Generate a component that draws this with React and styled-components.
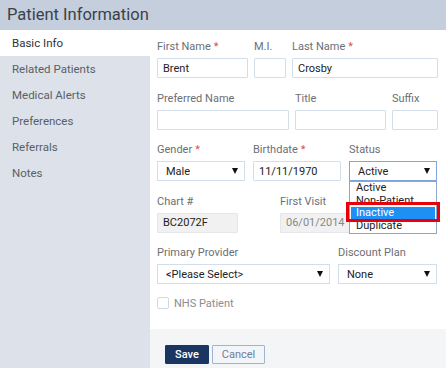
import React from 'react'
import styled, { createGlobalStyle } from 'styled-components'

const Global = createGlobalStyle`
  body {
    margin: 0;
    font-family: Roboto, "Liberation Sans", sans-serif;
    background: #fff;
  }
  * { box-sizing: border-box; }
`

const sideItems = ['Basic Info', 'Related Patients', 'Medical Alerts', 'Preferences', 'Referrals', 'Notes']
const statusOptions = ['Active', 'Non-Patient', 'Inactive', 'Duplicate']

function Select({ value, width, focused, children }) {
  return (
    <SelectBox width={width} focused={focused}>
      <span>{value}</span>
      <Caret />
      {children}
    </SelectBox>
  )
}

function Field({ label, required, width, children, ...rest }) {
  return (
    <FieldWrap width={width} {...rest}>
      <Label>
        {label}
        {required && <Req>*</Req>}
      </Label>
      {children}
    </FieldWrap>
  )
}

export default function App() {
  return (
    <>
      <Global />
      <Page>
        <Header>Patient Information</Header>
        <Sidebar>
          {sideItems.map((s, i) => (
            <SideItem key={s} active={i === 0}>{s}</SideItem>
          ))}
        </Sidebar>
        <Main>
          <Form>
            <Row>
              <Field label="First Name" required width={91}>
                <Input readOnly value="Brent" />
              </Field>
              <Field label="M.I." width={32}>
                <Input readOnly value="" />
              </Field>
              <Field label="Last Name" required width={146}>
                <Input readOnly value="Crosby" />
              </Field>
            </Row>
            <Row>
              <Field label="Preferred Name" width={132}>
                <Input readOnly value="" />
              </Field>
              <Field label="Title" width={91}>
                <Input readOnly value="" />
              </Field>
              <Field label="Suffix" width={46}>
                <Input readOnly value="" />
              </Field>
            </Row>
            <Row gap={8}>
              <Field label="Gender" required width={88}>
                <Select value="Male" />
              </Field>
              <Field label="Birthdate" required width={88}>
                <Input readOnly value="11/11/1970" />
              </Field>
              <Field label="Status" width={88} style={{ zIndex: 2 }}>
                <Select value="Active" focused>
                  <DropList>
                    {statusOptions.map((o) => (
                      <Option key={o} selected={o === 'Inactive'}>{o}</Option>
                    ))}
                  </DropList>
                  <Highlight />
                </Select>
              </Field>
            </Row>
            <Row gap={42}>
              <Field label="Chart #" width={81}>
                <Input readOnly disabled value="BC2072F" dark />
              </Field>
              <Field label="First Visit" width={81}>
                <Input readOnly disabled value="06/01/2014" />
              </Field>
            </Row>
            <Row gap={8}>
              <Field label="Primary Provider" width={173}>
                <Select value="<Please Select>" />
              </Field>
              <Field label="Discount Plan" width={99}>
                <Select value="None" />
              </Field>
            </Row>
            <CheckRow>
              <Box />
              <span>NHS Patient</span>
            </CheckRow>
          </Form>
          <Footer>
            <SaveButton>Save</SaveButton>
            <CancelButton>Cancel</CancelButton>
          </Footer>
        </Main>
      </Page>
    </>
  )
}

const Page = styled.div`
  width: 446px;
  height: 368px;
  display: grid;
  grid-template-columns: 150px 1fr;
  grid-template-rows: 30px 1fr;
  overflow: hidden;
`

const Header = styled.div`
  grid-column: 1 / 3;
  background: #c4cedc;
  color: #3b414b;
  font-size: 16.5px;
  line-height: 30px;
  padding-left: 7px;
`

const Sidebar = styled.div`
  background: #dde2ea;
  display: flex;
  flex-direction: column;
`

const SideItem = styled.div`
  height: 26px;
  line-height: 26px;
  padding-left: 12px;
  font-size: 11.5px;
  color: ${(p) => (p.active ? '#333' : '#5a5f66')};
  background: ${(p) => (p.active ? '#fff' : 'transparent')};
`

const Main = styled.div`
  display: flex;
  flex-direction: column;
  background: #fff;
`

const Form = styled.div`
  flex: 1;
  padding: 10px 9px 0 7px;
  display: flex;
  flex-direction: column;
  gap: 13.5px;
`

const Row = styled.div`
  display: flex;
  gap: ${(p) => p.gap || 6}px;
`

const FieldWrap = styled.div`
  position: relative;
  width: ${(p) => p.width}px;
  display: flex;
  flex-direction: column;
`

const Label = styled.div`
  font-size: 11px;
  line-height: 14px;
  color: #6b6f75;
  margin-bottom: 4px;
  white-space: nowrap;
`

const Req = styled.span`
  color: #d9534f;
  margin-left: 3px;
`

const Input = styled.input`
  width: 100%;
  height: 20px;
  border: 1px solid ${(p) => (p.disabled ? '#e4e6e9' : '#d3deeb')};
  background: ${(p) => (p.disabled ? '#f1f1f1' : '#fff')};
  color: ${(p) => (p.disabled && !p.dark ? '#888' : '#222')};
  font-family: Roboto, "Liberation Sans", sans-serif;
  font-size: 11px;
  padding: 0 5px;
  outline: none;
  border-radius: 1px;
`

const SelectBox = styled.div`
  position: relative;
  height: 20px;
  border: 1px solid ${(p) => (p.focused ? '#7ea6dc' : '#d3deeb')};
  background: #fff;
  font-size: 11px;
  color: #222;
  display: flex;
  align-items: center;
  justify-content: space-between;
  padding: 0 6px 0 8px;
  white-space: nowrap;
`

const Caret = styled.span`
  width: 0;
  height: 0;
  border-left: 3px solid transparent;
  border-right: 3px solid transparent;
  border-top: 6px solid #111;
`

const DropList = styled.div`
  position: absolute;
  top: 19px;
  left: -1px;
  right: -1px;
  background: #fff;
  border: 1px solid #8fa6c6;
  padding: 0 0 1px;
`

const Option = styled.div`
  height: 12.5px;
  line-height: 12.5px;
  font-size: 11px;
  padding-left: 5px;
  margin: 0 1px;
  color: ${(p) => (p.selected ? '#fff' : '#222')};
  background: ${(p) => (p.selected ? '#1e8ff5' : 'transparent')};
`

const Highlight = styled.div`
  position: absolute;
  top: 40px;
  left: -4px;
  width: 94px;
  height: 20px;
  border: 3px solid #e8000b;
`

const CheckRow = styled.div`
  display: flex;
  align-items: center;
  gap: 5px;
  font-size: 11px;
  color: #8a8d92;
  margin-top: -1px;
`

const Box = styled.span`
  width: 12px;
  height: 12px;
  border: 1px solid #d5d8dc;
  border-radius: 2px;
  background: #fff;
`

const Footer = styled.div`
  height: 39px;
  background: #f4f5f7;
  display: flex;
  align-items: flex-start;
  gap: 3px;
  padding: 16px 0 0 15px;
`

const Button = styled.button`
  height: 19px;
  font-family: Roboto, "Liberation Sans", sans-serif;
  font-size: 11px;
  padding: 0;
  cursor: pointer;
  border-radius: 1px;
`

const SaveButton = styled(Button)`
  width: 44px;
  background: #1b3562;
  border: 1px solid #1b3562;
  color: #fff;
  font-weight: 500;
`

const CancelButton = styled(Button)`
  width: 53px;
  background: #f2f5fa;
  border: 1px solid #a3b4ca;
  color: #6f7f95;
`
